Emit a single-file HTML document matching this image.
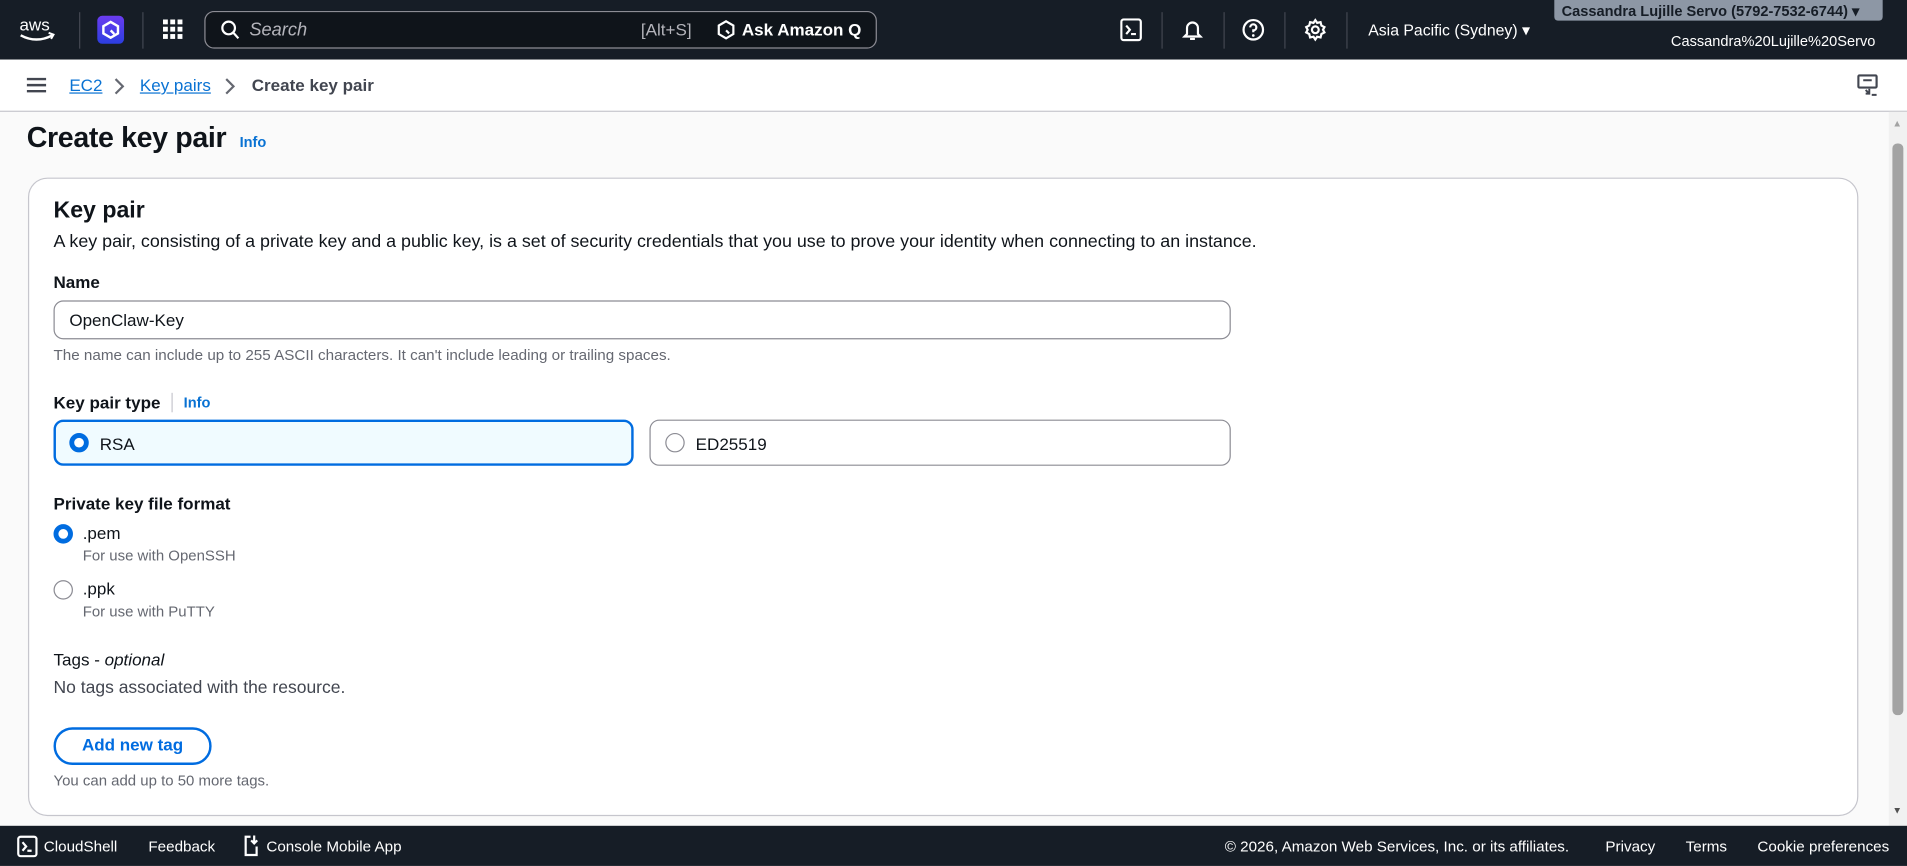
<!DOCTYPE html>
<html><head><meta charset="utf-8"><style>
*{box-sizing:border-box;margin:0;padding:0}
html,body{width:1907px;height:866px;overflow:hidden;background:#fff}
#w{width:1568px;height:712px;transform:scale(1.21620);transform-origin:0 0;position:relative;font-family:"Liberation Sans",sans-serif;color:#0f141a;background:#fafafa}
.a{position:absolute;white-space:nowrap}
.top{left:0;top:0;width:1568px;height:49px;background:#161d26}
.sep{position:absolute;top:10px;width:1px;height:30px;background:#424650}
.bc{left:0;top:49px;width:1568px;height:43px;background:#fff;border-bottom:1px solid #c6c6cd}
.lnk{color:#0972d3;text-decoration:underline}
.card{left:23px;top:146px;width:1505px;height:525px;background:#fff;border:1px solid #c6c6cd;border-radius:16px}
.lbl{font-size:14px;font-weight:bold}
.sm{font-size:12.3px;color:#656871}
.radio{position:absolute;width:16px;height:16px;border-radius:50%}
.on{border:4.5px solid #006ce0;background:#fff}
.off{border:1.5px solid #8c8c94;background:#fff}
.foot{left:0;top:679px;width:1568px;height:33px;background:#161d26;color:#fff;font-size:12.5px}
.ico{stroke:#fff;fill:none;stroke-width:1.8}
</style></head><body><div id="w">
<div class="a top">
 <svg class="a" style="left:15px;top:12px" width="32" height="26" viewBox="0 0 32 26"><text x="1" y="13" fill="#fff" font-family="Liberation Sans" font-size="14">aws</text><path d="M2 17 Q15 24 28 17" stroke="#fff" stroke-width="2" fill="none"/><path d="M25 15 L29 16.5 L27 20" stroke="#fff" stroke-width="1.6" fill="none"/></svg>
 <div class="sep" style="left:65px"></div>
 <div class="a" style="left:80px;top:13px;width:22px;height:23px;border-radius:4px;background:linear-gradient(#6b3cf0,#2b3ee0)"></div>
 <svg class="a" style="left:83px;top:16px" width="16" height="17" viewBox="0 0 16 17"><path d="M8 2 L14 5.5 V11.5 L8 15 L2 11.5 V5.5Z" stroke="#fff" stroke-width="2" fill="none"/><path d="M8 9 L11 12" stroke="#fff" stroke-width="2"/></svg>
 <div class="sep" style="left:117px"></div>
 <svg class="a" style="left:134px;top:16px" width="17" height="17"><g fill="#fff"><rect x="0" y="0" width="4" height="4"/><rect x="6" y="0" width="4" height="4"/><rect x="12" y="0" width="4" height="4"/><rect x="0" y="6" width="4" height="4"/><rect x="6" y="6" width="4" height="4"/><rect x="12" y="6" width="4" height="4"/><rect x="0" y="12" width="4" height="4"/><rect x="6" y="12" width="4" height="4"/><rect x="12" y="12" width="4" height="4"/></g></svg>
 <div class="a" style="left:168px;top:9px;width:553px;height:31px;border:1.5px solid #8c8c94;border-radius:8px;background:#0f141a"></div>
 <svg class="a" style="left:181px;top:16px" width="16" height="17"><circle cx="7" cy="7" r="5.2" class="ico"/><path d="M11 11 L15 15.5" class="ico"/></svg>
 <div class="a" style="left:205px;top:16px;font-size:15px;font-style:italic;color:#b4b4bb">Search</div>
 <div class="a" style="left:527px;top:16px;font-size:14px;color:#b4b4bb">[Alt+S]</div>
 <svg class="a" style="left:589px;top:16px" width="16" height="17" viewBox="0 0 16 17"><path d="M8 1.5 L14 5 V12 L8 15.5 L2 12 V5Z" class="ico" stroke-width="1.8"/><path d="M8 9 L10.5 11.5" class="ico"/></svg>
 <div class="a" style="left:610px;top:16px;font-size:14px;font-weight:bold;color:#fff">Ask Amazon Q</div>
 <svg class="a" style="left:921px;top:15px" width="18" height="19"><rect x="1" y="1" width="16" height="17" rx="2" class="ico"/><path d="M5 6 L8 9.5 L5 13 M9 13 H13" class="ico"/></svg>
 <div class="sep" style="left:955px"></div>
 <svg class="a" style="left:972px;top:15px" width="17" height="19"><path d="M4 13 V8 A4.5 4.5 0 0 1 13 8 V13 L15 15 H2Z" class="ico"/><path d="M6.5 17 H10.5" class="ico"/></svg>
 <div class="sep" style="left:1006px"></div>
 <svg class="a" style="left:1021px;top:15px" width="19" height="19"><circle cx="9.5" cy="9.5" r="8" class="ico"/><path d="M7 7.5 A2.5 2.5 0 1 1 9.5 10 V11.5" class="ico"/><circle cx="9.5" cy="14.2" r="1.1" fill="#fff"/></svg>
 <div class="sep" style="left:1056px"></div>
 <svg class="a" style="left:1072px;top:15px" width="19" height="19" viewBox="0 0 19 19"><path d="M9.5 1.5 L11 3.8 L13.8 3.2 L14.5 6 L17 7.3 L15.8 9.5 L17 11.7 L14.5 13 L13.8 15.8 L11 15.2 L9.5 17.5 L8 15.2 L5.2 15.8 L4.5 13 L2 11.7 L3.2 9.5 L2 7.3 L4.5 6 L5.2 3.2 L8 3.8Z" class="ico" stroke-width="1.6"/><circle cx="9.5" cy="9.5" r="2.8" class="ico"/></svg>
 <div class="sep" style="left:1107px"></div>
 <div class="a" style="left:1125px;top:17px;font-size:13px;color:#fff">Asia Pacific (Sydney) ▾</div>
 <div class="a" style="left:1278px;top:0;width:270px;height:17px;background:#8d97a5;border-radius:0 0 3px 3px;font-size:12px;font-weight:bold;color:#161d26;padding:2px 0 0 6px">Cassandra Lujille Servo (5792-7532-6744) ▾</div>
 <div class="a" style="right:26px;top:27px;font-size:12px;color:#fff">Cassandra%20Lujille%20Servo</div>
</div>
<div class="a bc">
 <svg class="a" style="left:22px;top:14px" width="16" height="14"><path d="M0 2H16M0 7H16M0 12H16" stroke="#424650" stroke-width="2"/></svg>
 <div class="a" style="left:57px;top:13px;font-size:14px"><span class="lnk">EC2</span></div>
 <svg class="a" style="left:93px;top:14px" width="10" height="16"><path d="M2 2 L8 8 L2 14" stroke="#656871" stroke-width="1.8" fill="none"/></svg>
 <div class="a" style="left:115px;top:13px;font-size:14px"><span class="lnk">Key pairs</span></div>
 <svg class="a" style="left:184px;top:14px" width="10" height="16"><path d="M2 2 L8 8 L2 14" stroke="#656871" stroke-width="1.8" fill="none"/></svg>
 <div class="a" style="left:207px;top:13px;font-size:14px;font-weight:bold;color:#424650">Create key pair</div>
 <svg class="a" style="left:1527px;top:12px" width="18" height="18"><rect x="1" y="1" width="15" height="10" rx="1" stroke="#424650" stroke-width="1.8" fill="none"/><path d="M5 5H12M7 13 L10 16 M10 12 V16 H7 M12 17 H16" stroke="#424650" stroke-width="1.6" fill="none"/></svg>
</div>
<div class="a" style="left:22px;top:100px;font-size:23.5px;font-weight:bold;letter-spacing:-0.3px">Create key pair</div>
<div class="a" style="left:197px;top:110px;font-size:12px;font-weight:bold;color:#0972d3">Info</div>
<div class="a card"></div>
<div class="a" style="left:44px;top:163px;font-size:19px;font-weight:bold">Key pair</div>
<div class="a" style="left:44px;top:191px;font-size:14.7px;color:#0f141a">A key pair, consisting of a private key and a public key, is a set of security credentials that you use to prove your identity when connecting to an instance.</div>
<div class="a lbl" style="left:44px;top:224px">Name</div>
<div class="a" style="left:44px;top:247px;width:968px;height:32px;border:1px solid #8c8c94;border-radius:8px"></div>
<div class="a" style="left:57px;top:255px;font-size:14px">OpenClaw-Key</div>
<div class="a sm" style="left:44px;top:285px;font-size:12.5px">The name can include up to 255 ASCII characters. It can't include leading or trailing spaces.</div>
<div class="a lbl" style="left:44px;top:323px">Key pair type</div>
<div class="a" style="left:141px;top:323px;width:1px;height:16px;background:#c6c6cd"></div>
<div class="a" style="left:151px;top:324px;font-size:12px;font-weight:bold;color:#0972d3">Info</div>
<div class="a" style="left:44px;top:345px;width:477px;height:38px;border:2px solid #006ce0;border-radius:8px;background:#f0fbff"></div>
<div class="radio on" style="left:57px;top:356px"></div>
<div class="a" style="left:82px;top:357px;font-size:14px">RSA</div>
<div class="a" style="left:534px;top:345px;width:478px;height:38px;border:1px solid #8c8c94;border-radius:8px"></div>
<div class="radio off" style="left:547px;top:356px"></div>
<div class="a" style="left:572px;top:357px;font-size:14px">ED25519</div>
<div class="a lbl" style="left:44px;top:406px">Private key file format</div>
<div class="radio on" style="left:44px;top:431px"></div>
<div class="a" style="left:68px;top:430px;font-size:14px">.pem</div>
<div class="a sm" style="left:68px;top:450px">For use with OpenSSH</div>
<div class="radio off" style="left:44px;top:477px"></div>
<div class="a" style="left:68px;top:476px;font-size:14px">.ppk</div>
<div class="a sm" style="left:68px;top:496px">For use with PuTTY</div>
<div class="a" style="left:44px;top:534px;font-size:14px">Tags - <i>optional</i></div>
<div class="a" style="left:44px;top:558px;font-size:14.4px;color:#424650">No tags associated with the resource.</div>
<div class="a" style="left:44px;top:598px;width:130px;height:31px;border:2px solid #006ce0;border-radius:16px"></div>
<div class="a" style="left:44px;top:604px;width:130px;text-align:center;font-size:14px;font-weight:bold;color:#006ce0">Add new tag</div>
<div class="a sm" style="left:44px;top:635px">You can add up to 50 more tags.</div>
<div class="a" style="left:1553px;top:92px;width:15px;height:587px;background:#f1f1f1"></div>
<div class="a" style="left:1556px;top:118px;width:9px;height:470px;background:#a3a3a3;border-radius:4px"></div>
<div class="a" style="left:1556px;top:97px;font-size:8px;color:#a3a3a3">▲</div>
<div class="a" style="left:1556px;top:662px;font-size:8px;color:#505050">▼</div>
<div class="a foot">
 <svg class="a" style="left:14px;top:8px" width="17" height="18"><rect x="1" y="1" width="15" height="16" rx="2" class="ico" stroke-width="1.6"/><path d="M4.5 5.5 L7.5 9 L4.5 12.5 M8.5 12.5 H12" class="ico" stroke-width="1.6"/></svg>
 <div class="a" style="left:36px;top:10px">CloudShell</div>
 <div class="a" style="left:122px;top:10px">Feedback</div>
 <svg class="a" style="left:200px;top:7px" width="14" height="19"><path d="M6 2 H2 V17 H11 V10" class="ico" stroke-width="1.5"/><path d="M9 1 V7 M6.5 5 L9 7.5 L11.5 5" class="ico" stroke-width="1.5"/></svg>
 <div class="a" style="left:219px;top:10px">Console Mobile App</div>
 <div class="a" style="left:1007px;top:10px">© 2026, Amazon Web Services, Inc. or its affiliates.</div>
 <div class="a" style="left:1320px;top:10px">Privacy</div>
 <div class="a" style="left:1386px;top:10px">Terms</div>
 <div class="a" style="left:1445px;top:10px">Cookie preferences</div>
</div>
</div></body></html>
